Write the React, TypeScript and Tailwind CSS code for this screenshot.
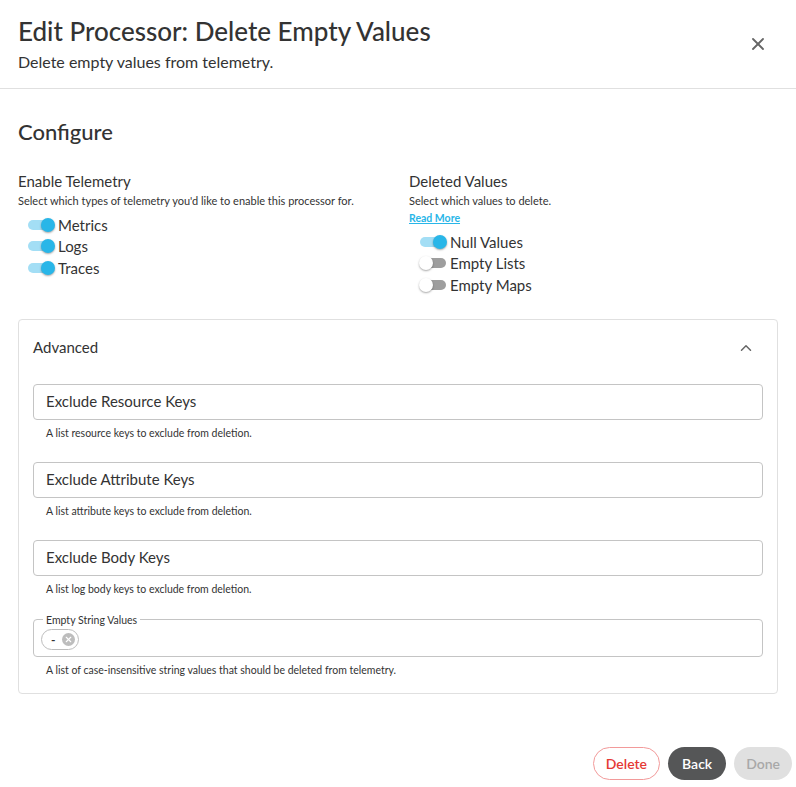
import { X, ChevronUp } from 'lucide-react'

function Toggle({ on, label }: { on: boolean; label: string }) {
  return (
    <div className="flex items-center h-[21.5px]">
      <div className="relative w-[28px] h-[14px] ml-[9px] mr-[3px] shrink-0">
        <div
          className={`absolute left-[1px] right-[1px] top-[2px] h-[10px] rounded-full ${
            on ? 'bg-[#a3def5]' : 'bg-[#9e9e9e]'
          }`}
        />
        <div
          className={`absolute top-0 w-[14px] h-[14px] rounded-full shadow-[0_1px_2px_rgba(0,0,0,0.35)] ${
            on ? 'right-0 bg-[#29b6e8]' : 'left-0 bg-white'
          }`}
        />
      </div>
      <span className="text-[15px] text-[#333]">{label}</span>
    </div>
  )
}

function TextField({ label, help }: { label: string; help: string }) {
  return (
    <div>
      <div className="h-[36px] rounded border border-[#c4c4c4] flex items-center px-[12px] text-[15px] text-[#333]">
        {label}
      </div>
      <p className="mt-[6px] ml-[13px] text-[10.5px] leading-[14px] text-[#333]">{help}</p>
    </div>
  )
}

export default function App() {
  return (
    <div
      className="w-[796px] h-[787px] bg-white text-[#333] relative overflow-hidden"
      style={{ fontFamily: 'Lato, "Open Sans", sans-serif' }}
    >
      {/* Header */}
      <div className="flex items-start justify-between px-[18px] pt-[14px] pb-[15px] border-b border-[#e0e0e0]">
        <div>
          <h1 className="text-[26px] font-medium leading-[35px] text-[#333]">
            Edit Processor: Delete Empty Values
          </h1>
          <p className="text-[16px] leading-[22px] mt-[2px]">Delete empty values from telemetry.</p>
        </div>
        <button className="mt-[20px] mr-[10px] text-[#666]">
          <X className="h-[20px] w-[20px]" strokeWidth={2.2} />
        </button>
      </div>

      {/* Content */}
      <div className="px-[18px] pt-[29px]">
        <h2 className="text-[22px] font-medium leading-[28px]">Configure</h2>

        <div className="grid grid-cols-2 mt-[25px]">
          <div>
            <h3 className="text-[15px] leading-[20px]">Enable Telemetry</h3>
            <p className="text-[11px] mt-[3px] leading-[14px]">
              Select which types of telemetry you'd like to enable this processor for.
            </p>
            <div className="mt-[6px]">
              <Toggle on label="Metrics" />
              <Toggle on label="Logs" />
              <Toggle on label="Traces" />
            </div>
          </div>
          <div className="pl-[11px]">
            <h3 className="text-[15px] leading-[20px]">Deleted Values</h3>
            <p className="text-[11px] mt-[3px] leading-[14px]">Select which values to delete.</p>
            <a className="block text-[10.5px] font-bold text-[#29b6e8] underline leading-[16px] mt-[2px]">Read More</a>
            <div className="ml-[1px] mt-[5px]">
              <Toggle on label="Null Values" />
              <Toggle on={false} label="Empty Lists" />
              <Toggle on={false} label="Empty Maps" />
            </div>
          </div>
        </div>

        {/* Advanced */}
        <div className="mt-[23px] border border-[#e0e0e0] rounded pb-[16px]">
          <div className="flex items-center justify-between h-[56px] px-[14px]">
            <span className="text-[15px]">Advanced</span>
            <ChevronUp className="h-[18px] w-[18px] text-[#666] mr-[8px]" strokeWidth={2} />
          </div>
          <div className="px-[14px] pt-[8px] flex flex-col gap-[22px]">
            <TextField label="Exclude Resource Keys" help="A list resource keys to exclude from deletion." />
            <TextField label="Exclude Attribute Keys" help="A list attribute keys to exclude from deletion." />
            <TextField label="Exclude Body Keys" help="A list log body keys to exclude from deletion." />
            <div>
              <fieldset className="h-[43px] rounded border border-[#c4c4c4] px-[7px] -mt-[4px]">
                <legend className="text-[10.5px] px-[3px] ml-[2px] leading-[12px]">Empty String Values</legend>
                <div className="inline-flex items-center h-[21px] rounded-full border border-[#bdbdbd] pl-[9px] pr-[3px] gap-[7px] mt-[1px]">
                  <span className="text-[12px] font-bold leading-none">-</span>
                  <span className="w-[13px] h-[13px] rounded-full bg-[#bdbdbd] flex items-center justify-center">
                    <X className="h-[9px] w-[9px] text-white" strokeWidth={3} />
                  </span>
                </div>
              </fieldset>
              <p className="mt-[6px] ml-[13px] text-[10.5px] leading-[14px]">
                A list of case-insensitive string values that should be deleted from telemetry.
              </p>
            </div>
          </div>
        </div>
      </div>

      {/* Footer */}
      <div className="absolute bottom-[7px] right-[4px] flex gap-[8px]">
        <button className="h-[33px] px-[12px] rounded-full border border-[#f29a9a] text-[#e53935] text-[14px] font-semibold">
          Delete
        </button>
        <button className="h-[33px] px-[14px] rounded-full bg-[#555657] text-white text-[14px] font-semibold">
          Back
        </button>
        <button className="h-[33px] px-[12px] rounded-full bg-[#e0e0e0] text-[#a8a8a8] text-[14px] font-semibold">
          Done
        </button>
      </div>
    </div>
  )
}
